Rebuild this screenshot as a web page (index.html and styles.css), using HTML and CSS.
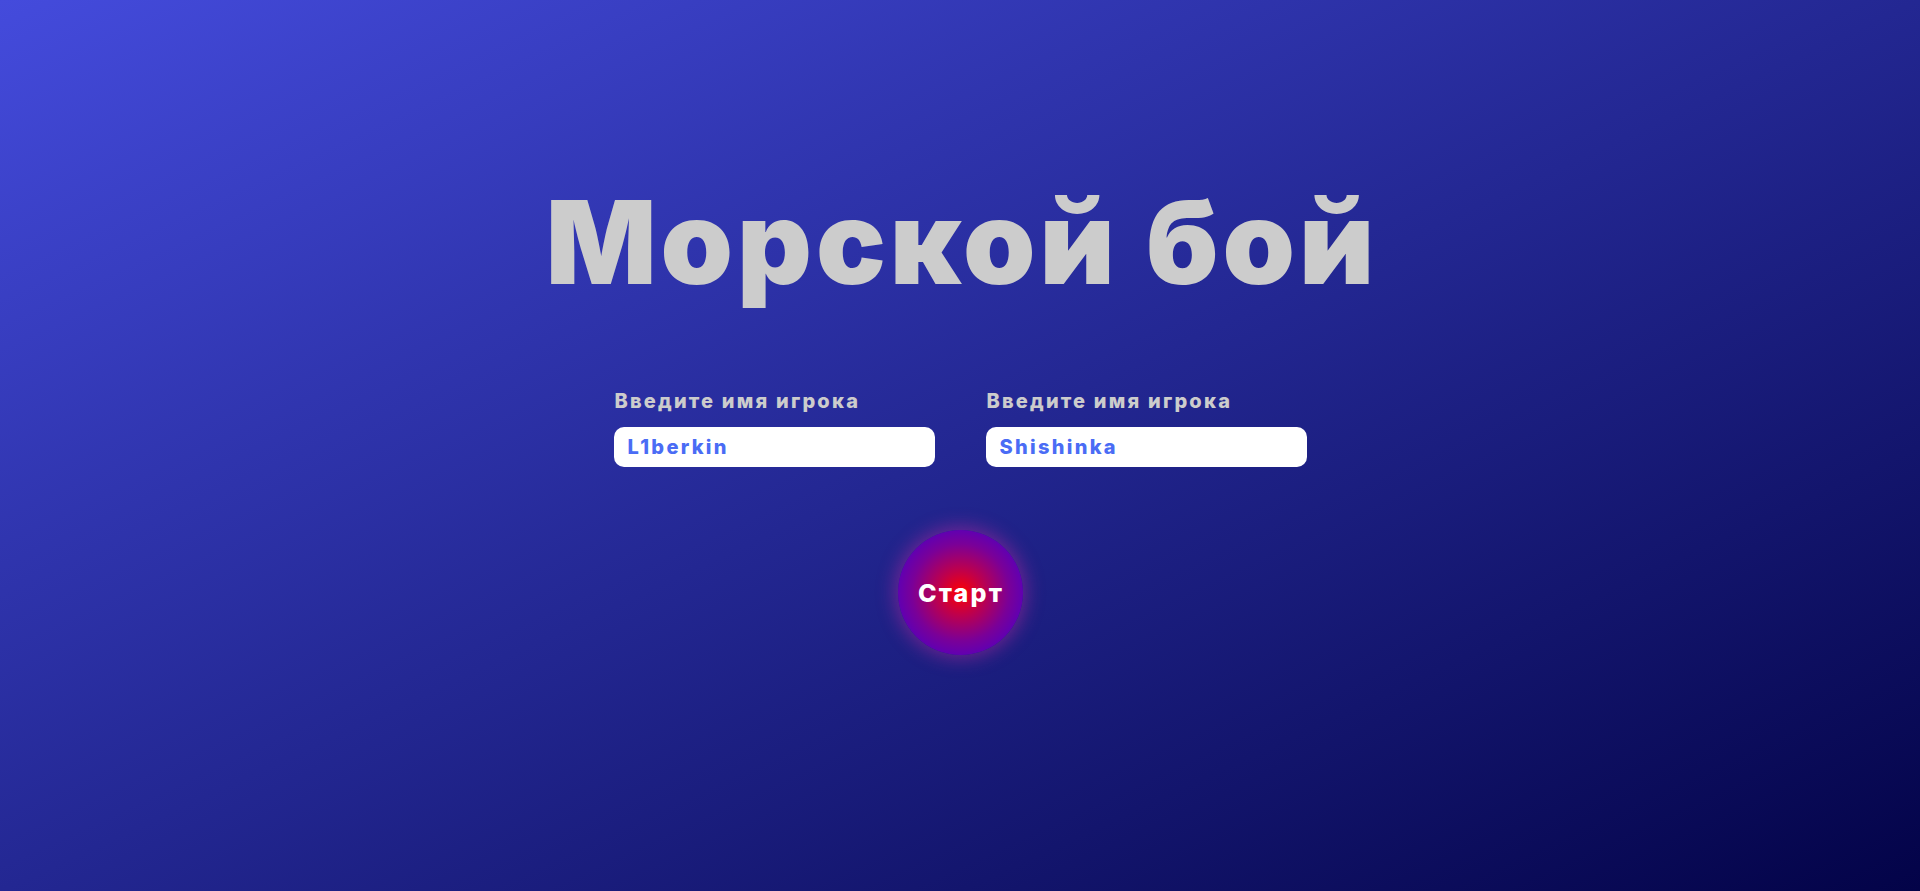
FILE: index.html
```html
<!DOCTYPE html>
<html lang="ru">
<head>
<meta charset="utf-8">
<title>Морской бой</title>
<link rel="stylesheet" href="styles.css">
</head>
<body>
<main class="screen">
  <h1 class="title">Морской бой</h1>
  <div class="players">
    <label class="player">
      <span class="player-label">Введите имя игрока</span>
      <input class="player-input" type="text" value="L1berkin">
    </label>
    <label class="player">
      <span class="player-label">Введите имя игрока</span>
      <input class="player-input" type="text" value="Shishinka">
    </label>
  </div>
  <button class="start" type="button">Старт</button>
</main>
</body>
</html>
```
FILE: styles.css
```css
html, body {
  margin: 0;
  padding: 0;
  height: 100%;
}

body {
  font-family: Inter, "Noto Sans", sans-serif;
  background: linear-gradient(to bottom right, #444bdc, #232792 50%, #030348);
  overflow: hidden;
}

.screen {
  height: 100%;
  box-sizing: border-box;
  padding-top: 184px;
  display: flex;
  flex-direction: column;
  align-items: center;
}

.title {
  margin: 0;
  font-size: 116px;
  line-height: 1;
  font-weight: 900;
  color: #cccccc;
  letter-spacing: 4px;
  padding-left: 4px;
}

.players {
  margin-top: 89px;
  display: flex;
  gap: 51px;
}

.player {
  width: 321px;
  display: flex;
  flex-direction: column;
  gap: 14px;
}

.player-label {
  font-size: 20px;
  line-height: 24px;
  font-weight: 800;
  color: #cccccc;
  letter-spacing: 2.2px;
  padding-left: 1px;
}

.player-input {
  box-sizing: border-box;
  width: 100%;
  height: 40px;
  border: none;
  border-radius: 10px;
  background: #ffffff;
  padding: 0 14px;
  font-family: Inter, "Noto Sans", sans-serif;
  font-size: 20px;
  font-weight: 800;
  letter-spacing: 2.3px;
  color: #4a6cf5;
  outline: none;
}

.start {
  margin-top: 63px;
  width: 125px;
  height: 125px;
  border: none;
  border-radius: 50%;
  background: radial-gradient(circle, #ff0000 0%, #c0004a 25%, #7a0098 55%, #4a00c8 85%, #4400cc 100%);
  box-shadow: 0 0 18px 4px rgba(200, 40, 160, 0.45);
  color: #ffffff;
  font-family: Inter, "Noto Sans", sans-serif;
  font-size: 25px;
  font-weight: 800;
  letter-spacing: 2.2px;
  padding: 0 0 0 2px;
  cursor: pointer;
}
```
